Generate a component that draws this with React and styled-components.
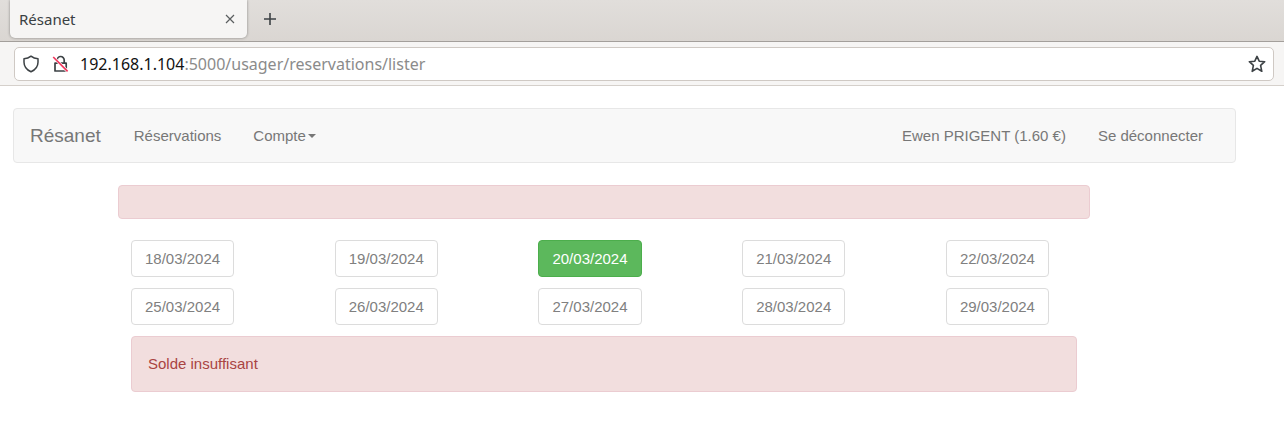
import React from "react";
import styled, { createGlobalStyle } from "styled-components";

const GlobalStyle = createGlobalStyle`
  *, *::before, *::after { box-sizing: border-box; }
  body {
    margin: 0;
    background: #fff;
    color: #333;
    font-family: "Liberation Sans", Arial, sans-serif;
    font-size: 15px;
    line-height: 20px;
  }
`;

const Browser = styled.header`
  font-family: "Noto Sans", sans-serif;
`;

const TabStrip = styled.div`
  display: flex;
  align-items: flex-start;
  height: 42px;
  padding-left: 10px;
  background: linear-gradient(#e1dedb, #dad6d2);
  border-bottom: 1px solid #a39f9b;
`;

const Tab = styled.div`
  display: flex;
  align-items: center;
  justify-content: space-between;
  width: 237px;
  height: 38px;
  padding: 0 9px;
  background: #f6f5f4;
  border-radius: 0 0 5px 5px;
  box-shadow: 0 0 3px rgba(0, 0, 0, 0.4);
  color: #3a4043;
`;

const IconButton = styled.button`
  display: flex;
  align-items: center;
  justify-content: center;
  width: ${(p) => p.$size}px;
  height: ${(p) => p.$size}px;
  padding: 0;
  border: 0;
  background: none;
  color: #3d4245;
`;

const NewTab = styled.div`
  display: flex;
  align-items: center;
  height: 38px;
  padding-left: 13px;
`;

const Toolbar = styled.div`
  padding: 5px 10px 4px 14px;
  background: #f6f5f4;
  border-bottom: 1px solid #d5d0cb;
`;

const AddressBar = styled.div`
  display: flex;
  align-items: center;
  height: 34px;
  padding: 0 7px;
  background: #fff;
  border: 1px solid #cfc9c4;
  border-radius: 5px;
`;

const Address = styled.a`
  flex: 1;
  margin-left: 10px;
  color: #8b8b8b;
  font-size: 16px;
  line-height: 24px;
  text-decoration: none;
`;

const Host = styled.span`
  color: #111;
`;

const Security = styled.div`
  display: flex;
  gap: 10px;
`;

const Page = styled.div`
  padding: 22px 48px 40px 13px;
`;

const Navbar = styled.nav`
  display: flex;
  align-items: center;
  justify-content: space-between;
  height: 55px;
  padding: 0 16px;
  background: #f8f8f8;
  border: 1px solid #e7e7e7;
  border-radius: 4px;
`;

const NavGroup = styled.div`
  display: flex;
  align-items: center;
`;

const Brand = styled.a`
  padding-right: 17px;
  color: #777;
  font-size: 19px;
  text-decoration: none;
`;

const NavLink = styled.a`
  display: flex;
  align-items: center;
  gap: 2px;
  padding: 0 16px;
  color: #777;
  text-decoration: none;
`;

const Caret = styled.span`
  width: 0;
  height: 0;
  border: 4px solid transparent;
  border-top-color: currentColor;
  border-bottom: 0;
`;

const Main = styled.main`
  margin: 22px 146px 0 105px;
`;

const Alert = styled.div`
  min-height: 34px;
  padding: ${(p) => (p.$compact ? "0" : "17px 16px")};
  background: #f2dede;
  border: 1px solid #ebccd1;
  border-radius: 4px;
  color: #a94442;
`;

const Content = styled.section`
  padding: 21px 13px 0;
`;

const Week = styled.div`
  display: flex;
  justify-content: space-between;
  padding-right: 28px;
  margin-bottom: 11px;
`;

const DateButton = styled.button`
  height: 37px;
  padding: 0 13px;
  background: ${(p) => (p.$booked ? "#5cb85c" : "#fff")};
  border: 1px solid ${(p) => (p.$booked ? "#4cae4c" : "#dcdcdc")};
  border-radius: 4px;
  color: ${(p) => (p.$booked ? "#fff" : "#808080")};
  font: inherit;
`;

const weeks = [
  ["18/03/2024", "19/03/2024", "20/03/2024", "21/03/2024", "22/03/2024"],
  ["25/03/2024", "26/03/2024", "27/03/2024", "28/03/2024", "29/03/2024"],
];
const booked = "20/03/2024";

const Shield = () => (
  <svg width="18" height="18" viewBox="0 0 18 18" fill="none" stroke="#3d4245" strokeWidth="1.5" strokeLinejoin="round">
    <path d="M9 1.2c2 1.6 4.400 2.400 7 2.600v3.400c0 4.300-2.900 7.700-7 9.600-4.100-1.900-7-5.300-7-9.600V3.800c2.600-.2 5-1 7-2.600Z" />
  </svg>
);

const InsecureLock = () => (
  <svg width="20" height="18" viewBox="0 0 20 18" fill="none" stroke="#3d4245" strokeWidth="1.7" strokeLinejoin="round">
    <path d="M7.200 8V5a3.500 3.500 0 0 1 7 0v3" />
    <path d="M5 8.200h11.200v7.800H5Z" />
    <path d="M3.200 2 17.600 16.400" stroke="#fff" strokeWidth="3" />
    <path d="M3.200 2 17.600 16.400" stroke="#f0365c" strokeWidth="1.700" />
  </svg>
);

const Star = () => (
  <svg width="18" height="18" viewBox="0 0 18 18" fill="none" stroke="#3d4245" strokeWidth="1.6" strokeLinejoin="round">
    <path d="m9 1.4 2.2 4.8 5.5.5-4.1 3.7 1.2 5.9L9 13.4l-4.8 2.9 1.2-5.9-4.1-3.7 5.5-.5Z" />
  </svg>
);

const Cross = () => (
  <svg width="10" height="10" viewBox="0 0 10 10" fill="none" stroke="#5a5e60" strokeWidth="1.2">
    <path d="m1 1 8 8M9 1 1 9" />
  </svg>
);

const Plus = () => (
  <svg width="14" height="14" viewBox="0 0 14 14" fill="none" stroke="currentColor" strokeWidth="1.6">
    <path d="M7 1v12M1 7h12" />
  </svg>
);

export default function App() {
  return (
    <>
      <GlobalStyle />
      <Browser>
        <TabStrip>
          <Tab>
            <span>Résanet</span>
            <IconButton type="button" $size={16} aria-label="Fermer l'onglet">
              <Cross />
            </IconButton>
          </Tab>
          <NewTab>
            <IconButton type="button" $size={20} aria-label="Nouvel onglet">
              <Plus />
            </IconButton>
          </NewTab>
        </TabStrip>
        <Toolbar>
          <AddressBar>
            <Security>
              <Shield />
              <InsecureLock />
            </Security>
            <Address href="#">
              <Host>192.168.1.104</Host>:5000/usager/reservations/lister
            </Address>
            <IconButton type="button" $size={18} aria-label="Marquer cette page">
              <Star />
            </IconButton>
          </AddressBar>
        </Toolbar>
      </Browser>
      <Page>
        <Navbar>
          <NavGroup>
            <Brand href="#">Résanet</Brand>
            <NavLink href="#">Réservations</NavLink>
            <NavLink href="#">
              Compte
              <Caret />
            </NavLink>
          </NavGroup>
          <NavGroup>
            <NavLink href="#">Ewen PRIGENT (1.60 €)</NavLink>
            <NavLink href="#">Se déconnecter</NavLink>
          </NavGroup>
        </Navbar>
        <Main>
          <Alert $compact />
          <Content>
            {weeks.map((days) => (
              <Week key={days[0]}>
                {days.map((day) => (
                  <DateButton key={day} type="button" $booked={day === booked}>
                    {day}
                  </DateButton>
                ))}
              </Week>
            ))}
            <Alert role="alert">Solde insuffisant</Alert>
          </Content>
        </Main>
      </Page>
    </>
  );
}
